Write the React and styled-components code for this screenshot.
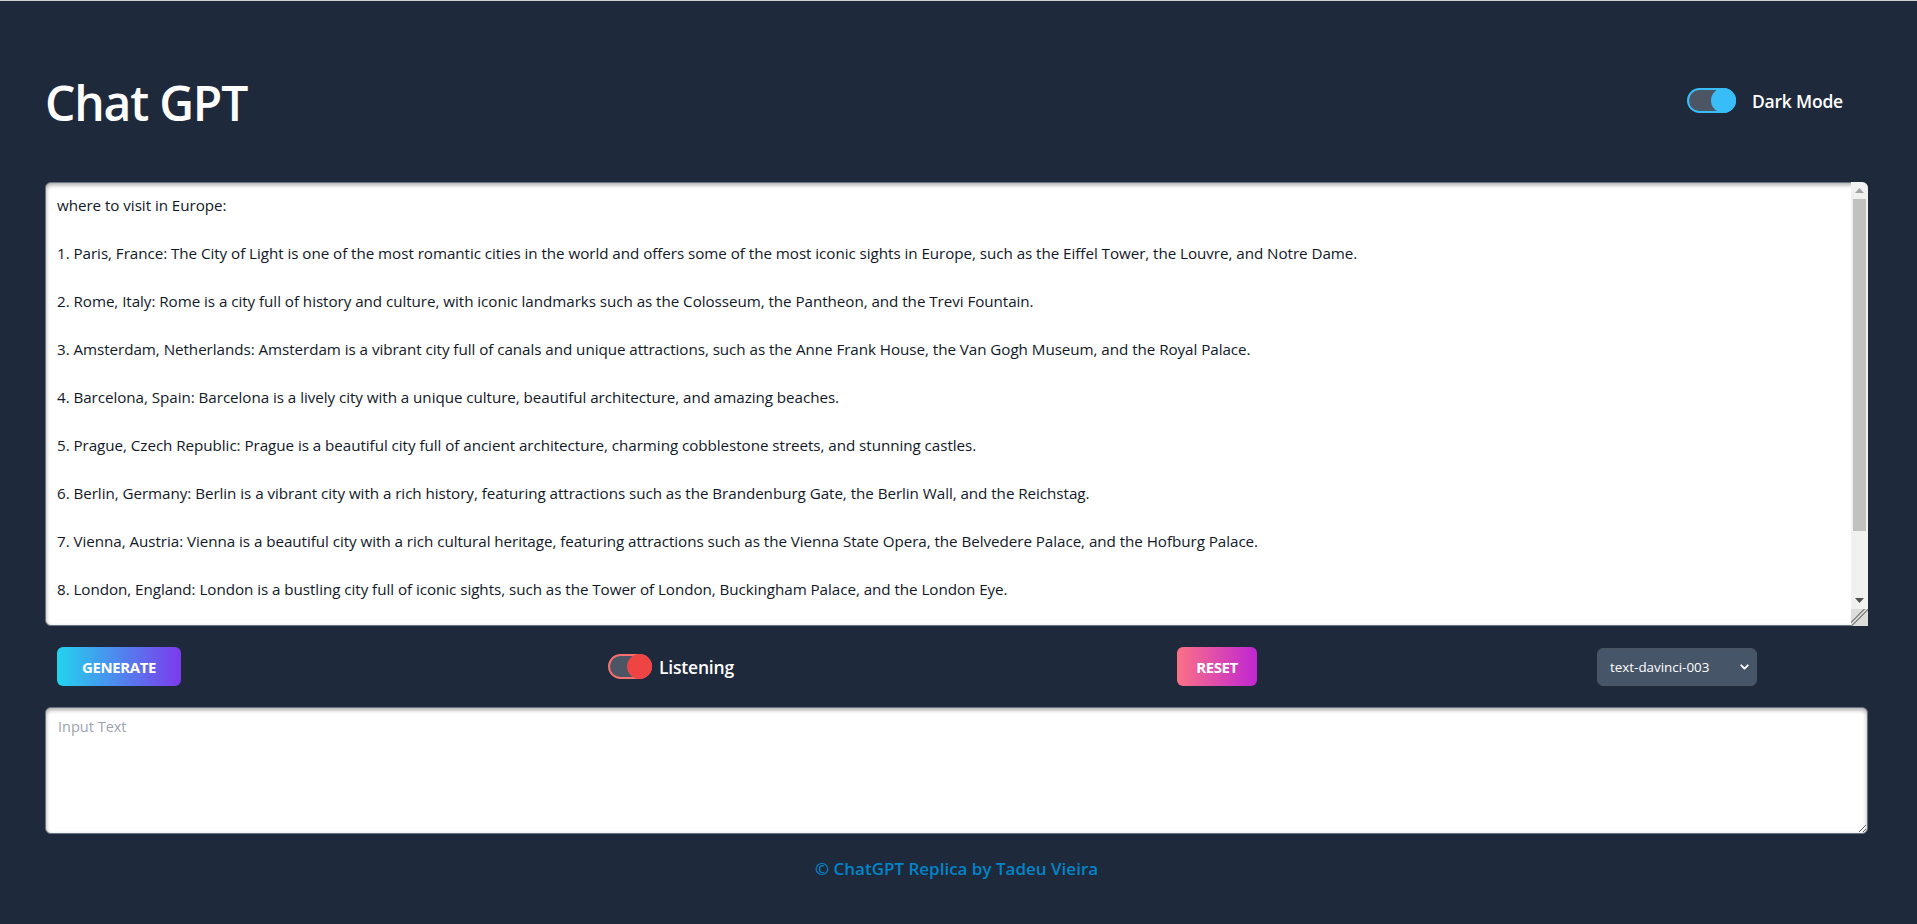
import React from 'react';
import styled, { createGlobalStyle } from 'styled-components';
import { ChevronDown } from 'lucide-react';

const initialAnswer = `where to visit in Europe:

1. Paris, France: The City of Light is one of the most romantic cities in the world and offers some of the most iconic sights in Europe, such as the Eiffel Tower, the Louvre, and Notre Dame.

2. Rome, Italy: Rome is a city full of history and culture, with iconic landmarks such as the Colosseum, the Pantheon, and the Trevi Fountain.

3. Amsterdam, Netherlands: Amsterdam is a vibrant city full of canals and unique attractions, such as the Anne Frank House, the Van Gogh Museum, and the Royal Palace.

4. Barcelona, Spain: Barcelona is a lively city with a unique culture, beautiful architecture, and amazing beaches.

5. Prague, Czech Republic: Prague is a beautiful city full of ancient architecture, charming cobblestone streets, and stunning castles.

6. Berlin, Germany: Berlin is a vibrant city with a rich history, featuring attractions such as the Brandenburg Gate, the Berlin Wall, and the Reichstag.

7. Vienna, Austria: Vienna is a beautiful city with a rich cultural heritage, featuring attractions such as the Vienna State Opera, the Belvedere Palace, and the Hofburg Palace.

8. London, England: London is a bustling city full of iconic sights, such as the Tower of London, Buckingham Palace, and the London Eye.

9. Venice, Italy: Venice is a unique city built on water, with romantic canals, gondolas, and stunning architecture.

10. Lisbon, Portugal: Lisbon is a charming coastal city with colorful neighborhoods, historic trams, and breathtaking views.`;

const RAIL_BUTTON = 17;

const GlobalStyle = createGlobalStyle`
  * {
    box-sizing: border-box;
  }

  body {
    margin: 0;
    background: #1e293b;
    font-family: 'Open Sans', 'Noto Sans', sans-serif;
  }
`;

class App extends React.Component {
  state = {
    dark: true,
    listening: true,
    answer: initialAnswer,
    prompt: '',
    model: 'text-davinci-003',
    thumb: { top: 0, height: 0 },
  };

  answerRef = React.createRef();

  componentDidMount() {
    this.measure();
  }

  measure = () => {
    const el = this.answerRef.current;
    if (!el) return;
    const track = el.offsetHeight - RAIL_BUTTON * 3;
    const ratio = el.clientHeight / el.scrollHeight;
    this.setState({
      thumb: {
        top: (el.scrollTop / el.scrollHeight) * track,
        height: Math.min(1, ratio) * track,
      },
    });
  };

  render() {
    const { dark, listening, answer, prompt, model, thumb } = this.state;

    return (
      <Page>
        <GlobalStyle />
        <Header>
          <Title>Chat GPT</Title>
          <HeaderToggle
            gap={16}
            onClick={() => this.setState({ dark: !dark })}
          >
            <Track color="#38bdf8" width={49}>
              <Knob color="#38bdf8" />
            </Track>
            <ToggleLabel>Dark Mode</ToggleLabel>
          </HeaderToggle>
        </Header>

        <AnswerBox>
          <Answer
            ref={this.answerRef}
            value={answer}
            onScroll={this.measure}
            onChange={e => this.setState({ answer: e.target.value }, this.measure)}
          />
          <Rail>
            <RailButton>
              <svg width="9" height="5" viewBox="0 0 9 5">
                <polygon points="0,5 4.5,0 9,5" fill="#a3a3a3" />
              </svg>
            </RailButton>
            <RailTrack>
              <Thumb style={{ top: thumb.top, height: thumb.height }} />
            </RailTrack>
            <RailButton>
              <svg width="9" height="5" viewBox="0 0 9 5">
                <polygon points="0,0 9,0 4.5,5" fill="#505050" />
              </svg>
            </RailButton>
          </Rail>
        </AnswerBox>

        <Controls>
          <Cell>
            <Button width={124} from="#22d3ee" to="#7c3aed">
              Generate
            </Button>
          </Cell>
          <Cell>
            <Toggle
              gap={7}
              onClick={() => this.setState({ listening: !listening })}
            >
              <Track color="#f87171" width={44}>
                <Knob color="#ef4444" />
              </Track>
              <ToggleLabel>Listening</ToggleLabel>
            </Toggle>
          </Cell>
          <Cell>
            <Button width={80} from="#fb7185" to="#c026d3">
              Reset
            </Button>
          </Cell>
          <Cell>
            <SelectWrap>
              <Select
                value={model}
                onChange={e => this.setState({ model: e.target.value })}
              >
                <option>text-davinci-003</option>
                <option>text-curie-001</option>
                <option>text-babbage-001</option>
                <option>text-ada-001</option>
              </Select>
              <Chevron>
                <ChevronDown size={13} strokeWidth={3.5} color="#ffffff" />
              </Chevron>
            </SelectWrap>
          </Cell>
        </Controls>

        <Prompt
          placeholder="Input Text"
          value={prompt}
          onChange={e => this.setState({ prompt: e.target.value })}
        />

        <Footer>© ChatGPT Replica by Tadeu Vieira</Footer>
      </Page>
    );
  }
}

const Page = styled.div`
  min-height: 100vh;
  border-top: 1px solid #cfd3d8;
  padding: 0 49px 0 45px;
  display: flex;
  flex-direction: column;
`;

const Header = styled.header`
  display: flex;
  flex-direction: row;
  align-items: center;
  justify-content: space-between;
  padding: 73px 25px 50px 0;
`;

const Title = styled.h1`
  margin: 0;
  color: #ffffff;
  font-size: 48px;
  line-height: 58px;
  font-weight: 600;
  letter-spacing: -1.2px;
`;

const Toggle = styled.div`
  display: flex;
  flex-direction: row;
  align-items: center;
  gap: ${props => props.gap}px;
  cursor: pointer;
`;

const HeaderToggle = styled(Toggle)`
  margin-bottom: 5px;
`;

const Track = styled.div`
  position: relative;
  width: ${props => props.width}px;
  height: 25px;
  border-radius: 13px;
  background: #4b5563;
  border: 2px solid ${props => props.color};
`;

const Knob = styled.span`
  position: absolute;
  top: -2px;
  right: -2px;
  width: 25px;
  height: 25px;
  border-radius: 50%;
  background: ${props => props.color};
`;

const ToggleLabel = styled.span`
  color: #ffffff;
  font-size: 17.5px;
  font-weight: 600;
  letter-spacing: -0.2px;
`;

const AnswerBox = styled.div`
  position: relative;
  height: 444px;
`;

const Answer = styled.textarea`
  display: block;
  width: 100%;
  height: 100%;
  margin: 0;
  padding: 10px 28px 10px 11px;
  resize: none;
  border: 1px solid #6b7280;
  border-radius: 6px;
  box-shadow: inset 0 2px 4px rgba(0, 0, 0, 0.35);
  background: #ffffff;
  color: #111827;
  font-family: 'Open Sans', 'Noto Sans', sans-serif;
  font-size: 15.2px;
  line-height: 24px;
  letter-spacing: -0.05px;
  overflow-y: auto;
  outline: none;

  &::-webkit-scrollbar {
    display: none;
  }
`;

const Rail = styled.div`
  position: absolute;
  top: 0;
  right: 0;
  bottom: 0;
  width: 17px;
  display: flex;
  flex-direction: column;
  background: #f1f1f1;
  border-top-right-radius: 6px;
  overflow: hidden;

  &::after {
    content: '';
    height: ${RAIL_BUTTON}px;
    background:
      linear-gradient(135deg, transparent 9px, #8a8a8a 9px, #8a8a8a 10px, transparent 10px,
        transparent 12px, #8a8a8a 12px, #8a8a8a 13px, transparent 13px),
      #dcdcdc;
  }
`;

const RailButton = styled.div`
  height: ${RAIL_BUTTON}px;
  display: flex;
  align-items: center;
  justify-content: center;
`;

const RailTrack = styled.div`
  position: relative;
  flex: 1 1;
`;

const Thumb = styled.div`
  position: absolute;
  left: 2px;
  right: 2px;
  background: #c1c1c1;
`;

const Controls = styled.div`
  display: grid;
  grid-template-columns: 551px 569px 420px 1fr;
  align-items: center;
  height: 81px;
  padding-left: 12px;
`;

const Cell = styled.div`
  display: flex;
  flex-direction: row;
  align-items: center;
`;

const Button = styled.button`
  width: ${props => props.width}px;
  height: 39px;
  padding: 0;
  border: none;
  border-radius: 6px;
  background: linear-gradient(to right, ${props => props.from}, ${props => props.to});
  color: #ffffff;
  font-family: 'Open Sans', 'Noto Sans', sans-serif;
  font-size: 15px;
  font-weight: 700;
  letter-spacing: -0.4px;
  text-transform: uppercase;
  cursor: pointer;
`;

const SelectWrap = styled.div`
  position: relative;
  width: 160px;
  height: 38px;
`;

const Select = styled.select`
  appearance: none;
  width: 100%;
  height: 100%;
  padding: 0 28px 0 12px;
  border: 1px solid #4b5563;
  border-radius: 6px;
  background: #475569;
  color: #ffffff;
  font-family: 'Open Sans', 'Noto Sans', sans-serif;
  font-size: 13.4px;
  outline: none;
`;

const Chevron = styled.span`
  position: absolute;
  top: 50%;
  right: 6px;
  transform: translateY(-50%);
  display: flex;
  pointer-events: none;
`;

const Prompt = styled.textarea`
  display: block;
  width: 100%;
  height: 127px;
  margin: 0;
  padding: 7px 12px;
  resize: vertical;
  border: 1px solid #6b7280;
  border-radius: 6px;
  box-shadow: inset 0 2px 4px rgba(0, 0, 0, 0.35);
  background: #ffffff;
  color: #111827;
  font-family: 'Open Sans', 'Noto Sans', sans-serif;
  font-size: 14.5px;
  line-height: 24px;
  outline: none;

  &::placeholder {
    color: #9ca3af;
  }
`;

const Footer = styled.footer`
  padding: 24px 0 40px;
  text-align: center;
  color: #0284c7;
  font-size: 17px;
  font-weight: 600;
  line-height: 22px;
`;

export default App;
